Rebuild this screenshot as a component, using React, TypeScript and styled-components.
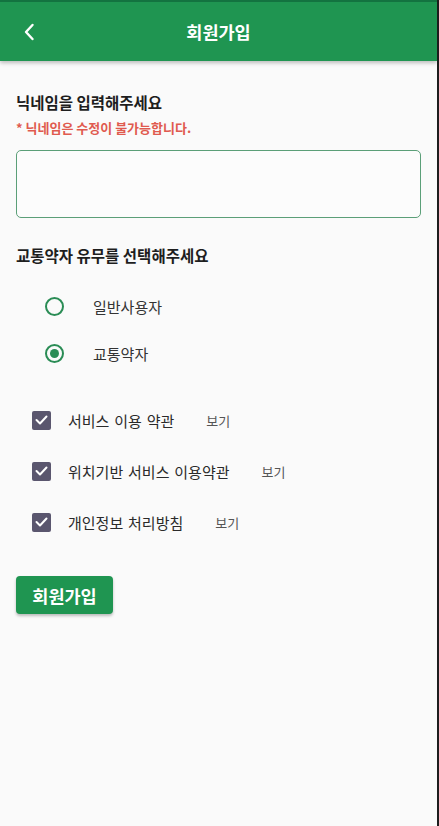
import React, { useState } from "react";
import styled, { createGlobalStyle } from "styled-components";

const GlobalStyle = createGlobalStyle`
  html, body {
    margin: 0;
    padding: 0;
    background: #fafafa;
  }
  body {
    font-family: "Noto Sans CJK KR", "Noto Sans", sans-serif;
    color: #222;
  }
  * { box-sizing: border-box; }
`;

const StyledMain = styled.main`
  width: 439px;
  height: 826px;
  background: #fafafa;
  border-right: 2px solid #1d1d1d;
  overflow: hidden;
`;

const StyledHeader = styled.header`
  height: 61px;
  background: #1f9551;
  border-top: 2px solid #137340;
  display: flex;
  align-items: center;
  justify-content: center;
  position: relative;
  box-shadow: 0 2px 4px rgba(0, 0, 0, 0.25);
`;

const StyledBack = styled.button`
  position: absolute;
  left: 20px;
  top: 50%;
  transform: translateY(-50%);
  background: none;
  border: none;
  padding: 0;
  width: 18px;
  height: 20px;
  display: flex;
  align-items: center;
  justify-content: center;
`;

const StyledTitle = styled.h1`
  margin: 0;
  color: #fff;
  font-size: 17.5px;
  font-weight: 700;
`;

const StyledBody = styled.div`
  padding: 29px 18px 0 16px;
`;

const StyledLabel = styled.div`
  font-size: 15.5px;
  font-weight: 700;
  color: #1e1e1e;
  line-height: 24px;
`;

const StyledNotice = styled.div`
  margin-top: 5px;
  font-size: 13px;
  font-weight: 700;
  color: #e05a4f;
  line-height: 18px;
`;

const StyledInput = styled.input`
  display: block;
  margin-top: 13px;
  width: 405px;
  height: 68px;
  border: 1px solid #5b9f78;
  border-radius: 5px;
  background: #fcfcfc;
  outline: none;
  font-size: 16px;
  padding: 0 12px;
`;

const StyledSection = styled.div`
  margin-top: 25px;
`;

const StyledRadioList = styled.div`
  display: flex;
  flex-direction: column;
  gap: 24px;
  padding: 28px 0 0 29px;
`;

const StyledRadioRow = styled.label`
  display: flex;
  align-items: center;
  height: 23px;
  font-size: 15px;
  color: #333;
`;

const StyledRadio = styled.span<{ checked: boolean }>`
  width: 19px;
  height: 19px;
  border-radius: 50%;
  border: 2px solid #2a8c55;
  display: flex;
  align-items: center;
  justify-content: center;
  margin-right: 29px;
  &::after {
    content: "";
    display: ${(p) => (p.checked ? "block" : "none")};
    width: 9px;
    height: 9px;
    border-radius: 50%;
    background: #2a8c55;
  }
`;

const StyledCheckList = styled.div`
  display: flex;
  flex-direction: column;
  gap: 29px;
  padding: 44px 0 0 16px;
`;

const StyledCheckRow = styled.div`
  display: flex;
  align-items: center;
  height: 22px;
`;

const StyledCheckBox = styled.span`
  width: 19px;
  height: 19px;
  border-radius: 2px;
  background: #5a566e;
  display: flex;
  align-items: center;
  justify-content: center;
  margin-right: 17px;
`;

const StyledCheckText = styled.span`
  font-size: 15px;
  word-spacing: 1.5px;
  color: #2a2a2a;
`;

const StyledView = styled.span`
  margin-left: 32px;
  font-size: 13px;
  color: #555;
`;

const StyledSubmit = styled.button`
  margin-top: 43px;
  width: 97px;
  height: 38px;
  background: #1f9551;
  color: #fff;
  border: none;
  border-radius: 4px;
  font-family: inherit;
  font-size: 17.5px;
  font-weight: 700;
  box-shadow: 0 2px 3px rgba(0, 0, 0, 0.25);
`;

const Check = () => (
  <svg width="13" height="10" viewBox="0 0 13 10" fill="none">
    <path d="M1.5 5l3.5 3.5L11.5 1.5" stroke="#fff" strokeWidth="2" strokeLinecap="round" strokeLinejoin="round" />
  </svg>
);

const terms = ["서비스 이용 약관", "위치기반 서비스 이용약관", "개인정보 처리방침"];

export default () => {
  const [weak, setWeak] = useState(true);
  return (
    <>
      <GlobalStyle />
      <StyledMain>
        <StyledHeader>
          <StyledBack aria-label="back">
            <svg width="12" height="18" viewBox="0 0 12 18" fill="none">
              <path d="M9.5 2L3 9l6.5 7" stroke="#fff" strokeWidth="2.4" strokeLinecap="round" strokeLinejoin="round" />
            </svg>
          </StyledBack>
          <StyledTitle>회원가입</StyledTitle>
        </StyledHeader>
        <StyledBody>
          <StyledLabel>닉네임을 입력해주세요</StyledLabel>
          <StyledNotice>* 닉네임은 수정이 불가능합니다.</StyledNotice>
          <StyledInput />
          <StyledSection>
            <StyledLabel>교통약자 유무를 선택해주세요</StyledLabel>
            <StyledRadioList>
              <StyledRadioRow onClick={() => setWeak(false)}>
                <StyledRadio checked={!weak} />
                일반사용자
              </StyledRadioRow>
              <StyledRadioRow onClick={() => setWeak(true)}>
                <StyledRadio checked={weak} />
                교통약자
              </StyledRadioRow>
            </StyledRadioList>
          </StyledSection>
          <StyledCheckList>
            {terms.map((t) => (
              <StyledCheckRow key={t}>
                <StyledCheckBox>
                  <Check />
                </StyledCheckBox>
                <StyledCheckText>{t}</StyledCheckText>
                <StyledView>보기</StyledView>
              </StyledCheckRow>
            ))}
          </StyledCheckList>
          <StyledSubmit>회원가입</StyledSubmit>
        </StyledBody>
      </StyledMain>
    </>
  );
};
